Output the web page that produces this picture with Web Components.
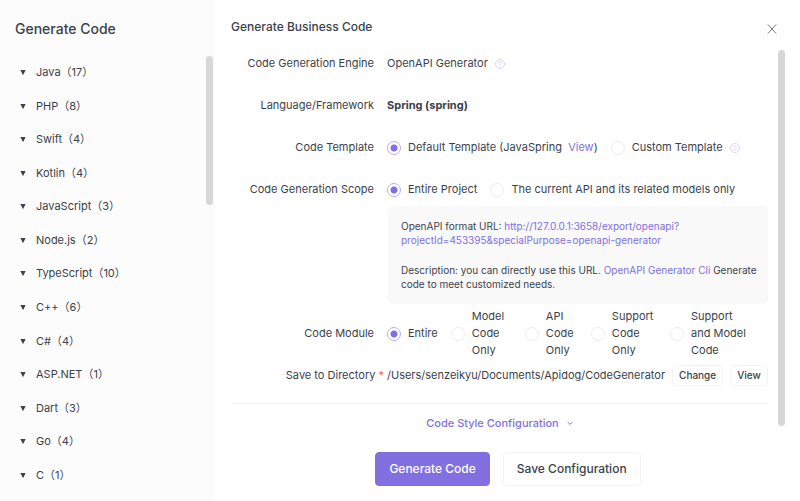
<!DOCTYPE html>
<html lang="en">
<head>
<meta charset="utf-8">
<title>Generate Code</title>
<style>
  html, body { margin: 0; height: 100%; }
  body {
    font: 400 11px/17px Inter, "Noto Sans CJK SC", sans-serif;
    color: #3b3f4b;
    background: #fff;
    --accent: #8270e1;
    --line: #f3f3f4;
  }
</style>
</head>
<body>
<code-app></code-app>
<script>
  const define = (name, html) => customElements.define(name, class extends HTMLElement {
    constructor() {
      super();
      this.attachShadow({ mode: "open" }).innerHTML = html;
    }
  });

  define("scroll-thumb", `
    <style>:host { display: block; width: 7px; border-radius: 4px; background: #d7d7d7; }</style>`);

  define("help-icon", `
    <style>:host { display: inline-flex; } svg { display: block; width: 10px; height: 10px; }</style>
    <svg viewBox="0 0 20 20" fill="none" stroke="#d3ccf8" stroke-width="1.7" stroke-linecap="round" role="img" aria-label="Help">
      <circle cx="10" cy="10" r="9"/>
      <path d="M7.4 8a2.6 2.6 0 1 1 3.9 2.2c-.9.5-1.3.9-1.3 1.9"/>
      <path d="M10 14.6v.2"/>
    </svg>`);

  define("language-item", `
    <style>
      :host { display: flex; flex: 1 0 auto; min-height: 33px; align-items: center; }
      button { all: unset; display: flex; align-items: center; gap: 10px; cursor: pointer; }
      svg { width: 6px; height: 5px; }
    </style>
    <button type="button">
      <svg viewBox="0 0 6 5" aria-hidden="true"><path d="M.9 0h4.2q.6 0 .3.6L3.4 4.4q-.4.6-.8 0L.6.6Q.3 0 .9 0z" fill="#3c414d"/></svg>
      <span><slot></slot></span>
    </button>`);

  define("language-sidebar", `
    <style>
      :host { display: flex; flex-direction: column; background: #fcfcfc; border-right: 1px solid #fafafa; box-sizing: border-box; overflow: hidden; }
      h1 { margin: 0; padding: 18px 16px 17px 15px; font-size: 14px; line-height: 21px; font-weight: 500; }
      .body { flex: 1; min-height: 0; display: flex; align-items: flex-start; }
      nav { align-self: stretch; flex: 1; display: flex; flex-direction: column; padding: 0 0 10px 20px; box-sizing: border-box; }
      scroll-thumb { height: 149px; }
    </style>
    <h1>Generate Code</h1>
    <div class="body">
      <nav aria-label="Languages"></nav>
      <scroll-thumb></scroll-thumb>
    </div>`);

  define("form-row", `
    <style>
      :host { display: grid; grid-template-columns: var(--label-width, 143px) minmax(0, 1fr); column-gap: var(--label-gap, 13px); align-items: center; }
      .label { text-align: right; white-space: nowrap; }
      .value { display: flex; align-items: center; gap: var(--value-gap, 13px); }
    </style>
    <div class="label"><slot name="label"></slot></div>
    <div class="value"><slot></slot></div>`);

  define("info-panel", `
    <style>
      :host { display: flex; flex-direction: column; gap: 16px; padding: 13px 8px 13px 13px; border-radius: 5px; background: #f9f9f9; font-size: 10px; line-height: 14px; }
    </style>
    <slot></slot>`);

  define("generate-form", `
    <style>
      :host { display: flex; flex-direction: column; min-width: 0; padding: 18px 15px 16px 17px; box-sizing: border-box; }
      a { color: var(--accent); text-decoration: none; }
      button { font: inherit; color: inherit; background: #fff; border: 1px solid var(--line); border-radius: 4px; cursor: pointer; }
      header { display: flex; justify-content: space-between; align-items: center; margin-bottom: 14px; }
      h2 { margin: 0; font-size: 12px; line-height: 18px; font-weight: 500; }
      .close { border: 0; padding: 0; margin: 4px 8px 0 0; line-height: 0; }
      .body { display: flex; justify-content: space-between; align-items: flex-start; gap: 10px; }
      form { flex: 1; min-width: 0; display: flex; flex-direction: column; padding-top: 5px; }
      .rows { display: flex; flex-direction: column; gap: 25px; }
      .engine { --value-gap: 7px; }
      label.radio { display: flex; align-items: center; gap: 7px; }
      input[type=radio] { appearance: none; flex: none; width: 14px; height: 14px; margin: 0; border: 1px solid #ececee; border-radius: 50%; background: #fff; }
      input[type=radio]:checked { border-color: #b9aef0; background: radial-gradient(circle, var(--accent) 3px, #fff 4px); }
      info-panel { margin: 8px 0 4px 157px; }
      p { margin: 0; }
      .save { margin-top: 6px; --label-width: 153px; --label-gap: 3px; --value-gap: 7px; }
      .save button { font-size: 10px; font-weight: 500; line-height: 19px; padding: 0 6px; white-space: nowrap; }
      .required { color: #f0616d; }
      hr { border: 0; border-top: 1px solid var(--line); margin: 17px 0 11px; width: 100%; }
      .more { align-self: center; border: 0; padding: 0; color: var(--accent); font-weight: 500; display: flex; align-items: center; gap: 8px; }
      footer { display: flex; justify-content: center; gap: 13px; padding-top: 20px; }
      footer button { font-size: 12px; font-weight: 500; line-height: 32px; padding: 0 13px; }
      footer .primary { background: var(--accent); border-color: var(--accent); color: #fff; }
      scroll-thumb { height: 376px; }
      .strong { font-weight: 700; color: #3c404b; }
      .radio.last { flex: none; padding-right: 15px; }
      .last span { width: 62px; }
    </style>
    <header>
      <h2>Generate Business Code</h2>
      <button class="close" type="button" aria-label="Close">
        <svg width="10" height="10" viewBox="0 0 10 10" stroke="#777b84" fill="none"><path d="M.8.4l8.4 9.2M9.2.4L.8 9.6"/></svg>
      </button>
    </header>
    <div class="body">
      <form>
        <div class="rows">
          <form-row class="engine"><span slot="label">Code Generation Engine</span><span>OpenAPI Generator</span><help-icon></help-icon></form-row>
          <form-row><span slot="label">Language/Framework</span><span class="strong">Spring (spring)</span></form-row>
          <form-row><span slot="label">Code Template</span>
            <label class="radio"><input type="radio" name="template" checked><span>Default Template (JavaSpring&nbsp; <a href="#view">View</a>)</span></label>
            <label class="radio"><input type="radio" name="template"><span>Custom Template</span><help-icon></help-icon></label>
          </form-row>
          <form-row><span slot="label">Code Generation Scope</span>
            <label class="radio"><input type="radio" name="scope" checked><span>Entire Project</span></label>
            <label class="radio"><input type="radio" name="scope"><span>The current API and its related models only</span></label>
          </form-row>
        </div>
        <info-panel>
          <p>OpenAPI format URL: <a href="#export">http://127.0.0.1:3658/export/openapi?<wbr>projectId=453395&amp;specialPurpose=openapi-generator</a></p>
          <p>Description: you can directly use this URL. <a href="#cli">OpenAPI Generator Cli</a> <span>Generate</span> <span>code to meet customized needs.</span></p>
        </info-panel>
        <form-row><span slot="label">Code Module</span>
          <label class="radio"><input type="radio" name="module" checked><span>Entire</span></label>
          <label class="radio"><input type="radio" name="module"><span>Model Code Only</span></label>
          <label class="radio"><input type="radio" name="module"><span>API Code Only</span></label>
          <label class="radio"><input type="radio" name="module"><span>Support Code Only</span></label>
          <label class="radio last"><input type="radio" name="module"><span>Support and Model Code</span></label>
        </form-row>
        <form-row class="save"><span slot="label">Save to Directory <span class="required">*</span></span>
          <span>/Users/senzeikyu/Documents/Apidog/CodeGenerator</span>
          <button type="button">Change</button>
          <button type="button">View</button>
        </form-row>
        <hr>
        <button class="more" type="button">Code Style Configuration
          <svg width="6" height="5" viewBox="0 0 6 5" fill="none" stroke="currentColor"><path d="M.6 1L3 3.4 5.4 1"/></svg>
        </button>
      </form>
      <scroll-thumb></scroll-thumb>
    </div>
    <footer>
      <button class="primary" type="button">Generate Code</button>
      <button type="button">Save Configuration</button>
    </footer>`);

  define("code-app", `
    <style>
      :host { display: grid; grid-template-columns: 214px minmax(0, 1fr); height: 100vh; overflow: hidden; }
    </style>
    <language-sidebar></language-sidebar>
    <generate-form></generate-form>`);

  const languages = [["Java", 17], ["PHP", 8], ["Swift", 4], ["Kotlin", 4], ["JavaScript", 3], ["Node.js", 2],
    ["TypeScript", 10], ["C++", 6], ["C#", 4], ["ASP.NET", 1], ["Dart", 3], ["Go", 4], ["C", 1]];
  const sidebar = document.querySelector("code-app").shadowRoot.querySelector("language-sidebar");
  sidebar.shadowRoot.querySelector("nav").append(...languages.map(([name, count]) => {
    const item = document.createElement("language-item");
    item.textContent = `${name}（${count}）`;
    return item;
  }));
</script>
</body>
</html>
